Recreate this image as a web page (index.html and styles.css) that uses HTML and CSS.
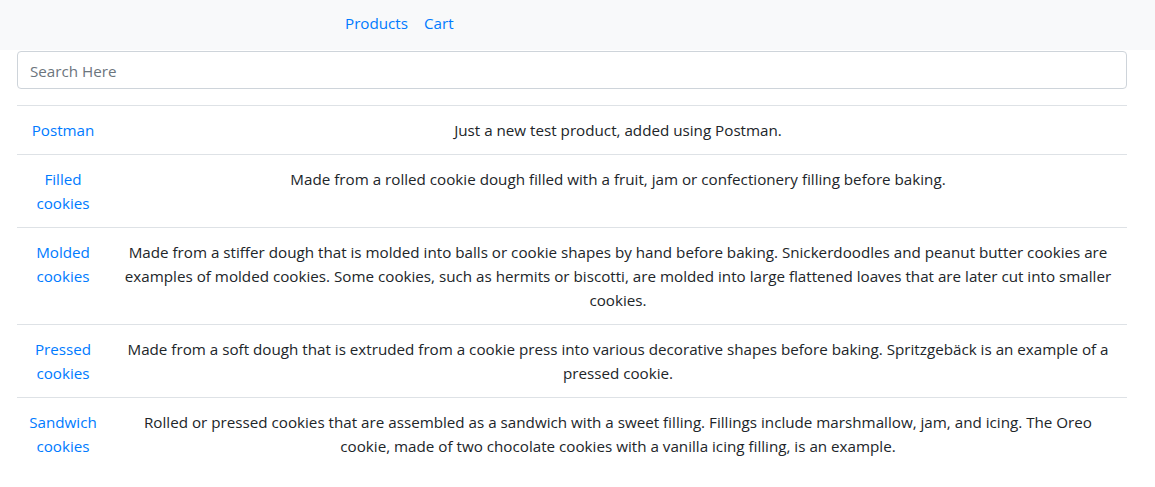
FILE: index.html
```html
<!DOCTYPE html>
<html lang="en">
<head>
<meta charset="utf-8">
<title>Products</title>
<link rel="stylesheet" href="styles.css">
</head>
<body>
<nav class="navbar">
  <ul class="nav-links">
    <li><a class="nav-link" href="#">Products</a></li>
    <li><a class="nav-link" href="#">Cart</a></li>
  </ul>
</nav>
<main class="content">
  <input class="search" type="text" placeholder="Search Here">
  <table class="products">
    <colgroup><col class="col-name"><col></colgroup>
    <tbody>
      <tr><td class="name"><a href="#">Postman</a></td><td class="desc">Just a new test product, added using Postman.</td></tr>
      <tr><td class="name"><a href="#">Filled cookies</a></td><td class="desc">Made from a rolled cookie dough filled with a fruit, jam or confectionery filling before baking.</td></tr>
      <tr><td class="name"><a href="#">Molded cookies</a></td><td class="desc">Made from a stiffer dough that is molded into balls or cookie shapes by hand before baking. Snickerdoodles and peanut butter cookies are examples of molded cookies. Some cookies, such as hermits or biscotti, are molded into large flattened loaves that are later cut into smaller cookies.</td></tr>
      <tr><td class="name"><a href="#">Pressed cookies</a></td><td class="desc">Made from a soft dough that is extruded from a cookie press into various decorative shapes before baking. Spritzgebäck is an example of a pressed cookie.</td></tr>
      <tr><td class="name"><a href="#">Sandwich cookies</a></td><td class="desc">Rolled or pressed cookies that are assembled as a sandwich with a sweet filling. Fillings include marshmallow, jam, and icing. The Oreo cookie, made of two chocolate cookies with a vanilla icing filling, is an example.</td></tr>
    </tbody>
  </table>
</main>
</body>
</html>
```
FILE: styles.css
```css
* { box-sizing: border-box; }
body {
  margin: 0;
  font-family: "Open Sans", "Noto Sans", sans-serif;
  font-size: 15.2px;
  line-height: 24px;
  color: #212529;
  background: #fff;
}
a { color: #007bff; text-decoration: none; }

.navbar {
  height: 50px;
  background: #f8f9fa;
  padding: 11px 0 0 337px;
}
.nav-links {
  list-style: none;
  margin: 0;
  padding: 0;
  display: flex;
}
.nav-link {
  display: block;
  padding: 0 8px;
  line-height: 24px;
}

.content {
  padding: 1px 28px 0 17px;
}
.search {
  display: block;
  width: 100%;
  height: 38px;
  padding: 7px 12px 5px;
  font-family: inherit;
  font-size: 15.2px;
  line-height: 24px;
  color: #495057;
  border: 1px solid #ced4da;
  border-radius: 4px;
  background: #fff;
  outline: none;
}
.search::placeholder { color: #6c757d; opacity: 1; }

.products {
  width: 100%;
  margin-top: 16px;
  border-collapse: collapse;
  table-layout: fixed;
}
.col-name { width: 92px; }
.products td {
  padding: 12px;
  border-top: 1px solid #dee2e6;
  text-align: center;
  vertical-align: top;
}
```
